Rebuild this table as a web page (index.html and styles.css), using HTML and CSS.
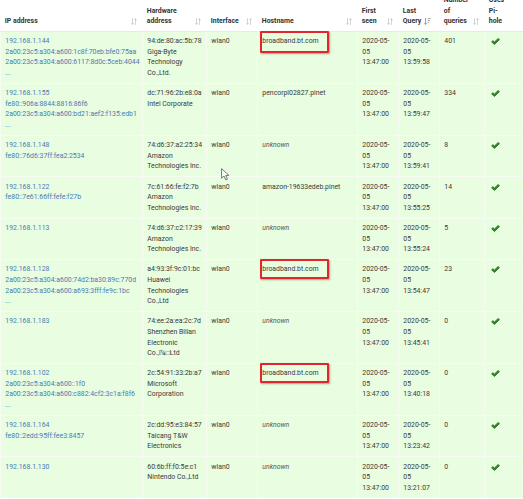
FILE: index.html
```html
<!DOCTYPE html>
<html>
<head>
<meta charset="utf-8">
<link rel="stylesheet" href="styles.css">
</head>
<body>
<div class="page">
<table class="net">
<colgroup>
<col class="c-ip"><col class="c-hw"><col class="c-if"><col class="c-host"><col class="c-first"><col class="c-last"><col class="c-num"><col class="c-uses">
</colgroup>
<thead>
<tr>
<th>IP address<span class="si"><svg viewBox="0 0 6 7" width="6" height="7"><path d="M1.5 0v6.2M0.4 5 1.5 6.5 2.6 5M4.5 7V0.8M3.4 2 4.5 0.5 5.6 2"/></svg></span></th>
<th>Hardware<br>address<span class="si"><svg viewBox="0 0 6 7" width="6" height="7"><path d="M1.5 0v6.2M0.4 5 1.5 6.5 2.6 5M4.5 7V0.8M3.4 2 4.5 0.5 5.6 2"/></svg></span></th>
<th>Interface<span class="si"><svg viewBox="0 0 6 7" width="6" height="7"><path d="M1.5 0v6.2M0.4 5 1.5 6.5 2.6 5M4.5 7V0.8M3.4 2 4.5 0.5 5.6 2"/></svg></span></th>
<th>Hostname<span class="si"><svg viewBox="0 0 6 7" width="6" height="7"><path d="M1.5 0v6.2M0.4 5 1.5 6.5 2.6 5M4.5 7V0.8M3.4 2 4.5 0.5 5.6 2"/></svg></span></th>
<th>First<br>seen<span class="si"><svg viewBox="0 0 6 7" width="6" height="7"><path d="M1.5 0v6.2M0.4 5 1.5 6.5 2.6 5M4.5 7V0.8M3.4 2 4.5 0.5 5.6 2"/></svg></span></th>
<th>Last<br>Query<span class="si si-on"><svg viewBox="0 0 7 7" width="7" height="7"><path d="M1.5 0v6.2M0.4 5 1.5 6.5 2.6 5M3.6 0.6h3M3.6 2.6h2.4M3.6 4.6h1.6"/></svg></span></th>
<th>Number<br>of<br>queries<span class="si"><svg viewBox="0 0 6 7" width="6" height="7"><path d="M1.5 0v6.2M0.4 5 1.5 6.5 2.6 5M4.5 7V0.8M3.4 2 4.5 0.5 5.6 2"/></svg></span></th>
<th>Uses<br>Pi-<br>hole</th>
</tr>
</thead>
<tbody>
<tr>
<td><a class="ip">192.168.1.144<br>2a00:23c5:a304:a600:1c8f:70eb:bfe0:75aa<br>2a00:23c5:a304:a600:6117:8d0c:5ceb:4044<br>...</a></td>
<td>94:de:80:ac:5b:78<br>Giga-Byte<br>Technology<br>Co.,Ltd.</td>
<td>wlan0</td>
<td class="host">broadband.bt.com<span class="hl"></span></td>
<td>2020-05-<br>05<br>13:47:00</td>
<td>2020-05-<br>05<br>13:59:58</td>
<td>401</td>
<td><svg class="ok" viewBox="0 0 10 8" width="9" height="7"><path d="M0.6 4.4 2 3 3.8 4.6 8.1 0.5 9.5 1.9 3.8 7.4Z"/></svg></td>
</tr>
<tr>
<td><a class="ip">192.168.1.155<br>fe80::906a:8844:8816:86f6<br>2a00:23c5:a304:a600:bd21:aef2:f135:edb1<br>...</a></td>
<td>dc:71:96:2b:e8:0a<br>Intel Corporate</td>
<td>wlan0</td>
<td class="host">pencorpl02827.pinet</td>
<td>2020-05-<br>05<br>13:47:00</td>
<td>2020-05-<br>05<br>13:59:47</td>
<td>334</td>
<td><svg class="ok" viewBox="0 0 10 8" width="9" height="7"><path d="M0.6 4.4 2 3 3.8 4.6 8.1 0.5 9.5 1.9 3.8 7.4Z"/></svg></td>
</tr>
<tr>
<td><a class="ip">192.168.1.148<br>fe80::76d6:37ff:fea2:2534</a></td>
<td>74:d6:37:a2:25:34<br>Amazon<br>Technologies Inc.</td>
<td>wlan0</td>
<td class="host"><em class="unk">unknown</em></td>
<td>2020-05-<br>05<br>13:47:00</td>
<td>2020-05-<br>05<br>13:59:41</td>
<td>8</td>
<td><svg class="ok" viewBox="0 0 10 8" width="9" height="7"><path d="M0.6 4.4 2 3 3.8 4.6 8.1 0.5 9.5 1.9 3.8 7.4Z"/></svg></td>
</tr>
<tr>
<td><a class="ip">192.168.1.122<br>fe80::7e61:66ff:fefe:f27b</a></td>
<td>7c:61:66:fe:f2:7b<br>Amazon<br>Technologies Inc.</td>
<td>wlan0</td>
<td class="host">amazon-19633edeb.pinet</td>
<td>2020-05-<br>05<br>13:47:00</td>
<td>2020-05-<br>05<br>13:55:25</td>
<td>14</td>
<td><svg class="ok" viewBox="0 0 10 8" width="9" height="7"><path d="M0.6 4.4 2 3 3.8 4.6 8.1 0.5 9.5 1.9 3.8 7.4Z"/></svg></td>
</tr>
<tr>
<td><a class="ip">192.168.1.113</a></td>
<td>74:d6:37:c2:17:39<br>Amazon<br>Technologies Inc.</td>
<td>wlan0</td>
<td class="host"><em class="unk">unknown</em></td>
<td>2020-05-<br>05<br>13:47:00</td>
<td>2020-05-<br>05<br>13:55:24</td>
<td>5</td>
<td><svg class="ok" viewBox="0 0 10 8" width="9" height="7"><path d="M0.6 4.4 2 3 3.8 4.6 8.1 0.5 9.5 1.9 3.8 7.4Z"/></svg></td>
</tr>
<tr>
<td><a class="ip">192.168.1.128<br>2a00:23c5:a304:a600:74d2:ba30:89c:770d<br>2a00:23c5:a304:a600:a693:3fff:fe9c:1bc<br>...</a></td>
<td>a4:93:3f:9c:01:bc<br>Huawei<br>Technologies<br>Co.,Ltd</td>
<td>wlan0</td>
<td class="host">broadband.bt.com<span class="hl hl-s"></span></td>
<td>2020-05-<br>05<br>13:47:00</td>
<td>2020-05-<br>05<br>13:54:47</td>
<td>23</td>
<td><svg class="ok" viewBox="0 0 10 8" width="9" height="7"><path d="M0.6 4.4 2 3 3.8 4.6 8.1 0.5 9.5 1.9 3.8 7.4Z"/></svg></td>
</tr>
<tr>
<td><a class="ip">192.168.1.183</a></td>
<td>74:ee:2a:ea:2c:7d<br>Shenzhen Bilian<br>Electronic<br>Co.,ï¼□Ltd</td>
<td>wlan0</td>
<td class="host"><em class="unk">unknown</em></td>
<td>2020-05-<br>05<br>13:47:00</td>
<td>2020-05-<br>05<br>13:45:41</td>
<td>0</td>
<td><svg class="ok" viewBox="0 0 10 8" width="9" height="7"><path d="M0.6 4.4 2 3 3.8 4.6 8.1 0.5 9.5 1.9 3.8 7.4Z"/></svg></td>
</tr>
<tr>
<td><a class="ip">192.168.1.102<br>2a00:23c5:a304:a600::1f0<br>2a00:23c5:a304:a600:c882:4cf2:3c1a:f8f6<br>...</a></td>
<td>2c:54:91:33:2b:a7<br>Microsoft<br>Corporation</td>
<td>wlan0</td>
<td class="host">broadband.bt.com<span class="hl hl-s"></span></td>
<td>2020-05-<br>05<br>13:47:00</td>
<td>2020-05-<br>05<br>13:40:18</td>
<td>0</td>
<td><svg class="ok" viewBox="0 0 10 8" width="9" height="7"><path d="M0.6 4.4 2 3 3.8 4.6 8.1 0.5 9.5 1.9 3.8 7.4Z"/></svg></td>
</tr>
<tr>
<td><a class="ip">192.168.1.164<br>fe80::2edd:95ff:fee3:8457</a></td>
<td>2c:dd:95:e3:84:57<br>Taicang T&amp;W<br>Electronics</td>
<td>wlan0</td>
<td class="host"><em class="unk">unknown</em></td>
<td>2020-05-<br>05<br>13:47:00</td>
<td>2020-05-<br>05<br>13:23:42</td>
<td>0</td>
<td><svg class="ok" viewBox="0 0 10 8" width="9" height="7"><path d="M0.6 4.4 2 3 3.8 4.6 8.1 0.5 9.5 1.9 3.8 7.4Z"/></svg></td>
</tr>
<tr>
<td><a class="ip">192.168.1.130</a></td>
<td>60:6b:ff:f0:5e:c1<br>Nintendo Co.,Ltd</td>
<td>wlan0</td>
<td class="host"><em class="unk">unknown</em></td>
<td>2020-05-<br>05<br>13:47:00</td>
<td>2020-05-<br>05<br>13:21:07</td>
<td>0</td>
<td><svg class="ok" viewBox="0 0 10 8" width="9" height="7"><path d="M0.6 4.4 2 3 3.8 4.6 8.1 0.5 9.5 1.9 3.8 7.4Z"/></svg></td>
</tr>
</tbody>
</table>
<svg class="cursor" viewBox="0 0 9 13" width="9" height="13"><path d="M0.6 0.6V10.2L3 8 4.8 11.9 6.4 11.2 4.7 7.4H7.9Z"/></svg>
</div>
</body>
</html>
```
FILE: styles.css
```css
html, body {
  margin: 0;
  padding: 0;
}
body {
  background: #ffffff;
  width: 523px;
  height: 499px;
  overflow: hidden;
  font-family: Roboto, "Liberation Sans", sans-serif;
  font-size: 6.9px;
  line-height: 10.6px;
  color: #3a3a3a;
}
.page {
  position: relative;
  width: 523px;
  height: 499px;
  overflow: hidden;
}
.net {
  border-collapse: collapse;
  table-layout: fixed;
  width: 530px;
  margin-top: -9.4px;
}
.c-ip { width: 142px; }
.c-hw { width: 64px; }
.c-if { width: 51px; }
.c-host { width: 100px; }
.c-first { width: 41px; }
.c-last { width: 41px; }
.c-num { width: 45px; }
.c-uses { width: 46px; }

.net th,
.net td {
  padding: 4.3px;
  text-align: left;
  white-space: nowrap;
  overflow: visible;
}
.net th {
  position: relative;
  vertical-align: bottom;
  font-weight: 700;
  color: #333;
  background: #fff;
  padding-right: 16px;
  border-bottom: 1px solid #e9e9e9;
}
.si {
  position: absolute;
  right: 6px;
  bottom: 6px;
  line-height: 0;
}
.si svg {
  fill: none;
  stroke: #c9c9c9;
  stroke-width: 0.8;
}
.si-on {
  right: 9px;
}
.si-on svg {
  stroke: #8a8a8a;
}
.net tbody tr {
  background: #e9fde0;
}
.net td {
  vertical-align: top;
  border-top: 1px solid #f6fcf2;
  border-left: 1px solid #f6fcf2;
  border-right: 1px solid #f6fcf2;
}
.ip {
  color: #4a7bb3;
  text-decoration: none;
}
.unk {
  color: #555;
  font-style: italic;
}
.host {
  position: relative;
}
.hl {
  position: absolute;
  left: 2px;
  top: -1px;
  width: 69px;
  height: 22px;
  box-sizing: border-box;
  border: 2px solid #e3262c;
  border-radius: 1px;
  box-shadow: 1px 1px 2px rgba(0, 0, 0, 0.35);
}
.hl-s {
  height: 20px;
}
.ok {
  display: block;
  margin: 2px 0 0 1.5px;
  fill: #239a23;
  stroke: #145214;
  stroke-width: 0.8;
}
.cursor {
  position: absolute;
  left: 221px;
  top: 168px;
  fill: #fff;
  stroke: #555;
  stroke-width: 0.8;
}
```
